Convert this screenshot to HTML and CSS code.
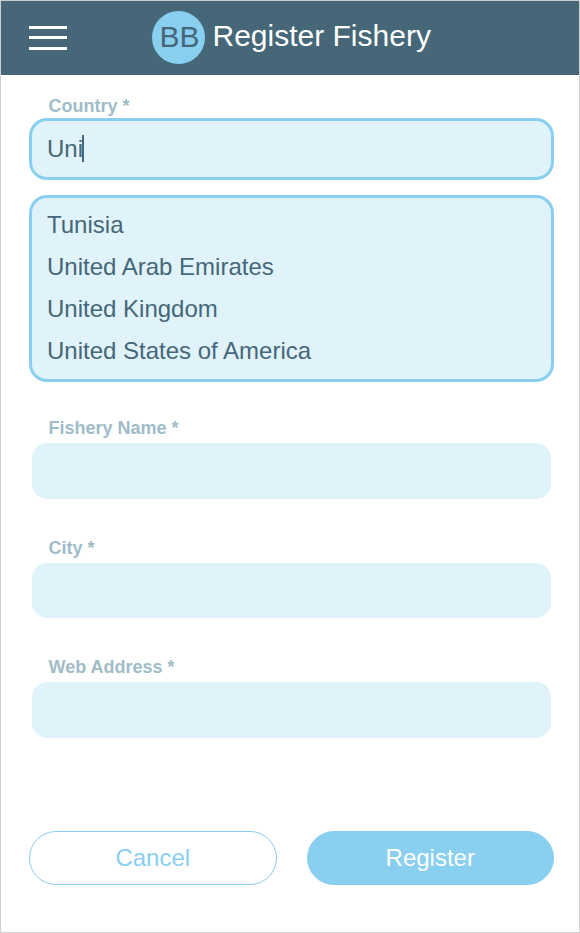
FILE: index.html
```html
<!DOCTYPE html>
<html lang="en">
<head>
<meta charset="utf-8">
<title>Register Fishery</title>
<link rel="stylesheet" href="styles.css">
</head>
<body>
<main class="screen">
  <header class="topbar">
    <div class="menu"><span></span><span></span><span></span></div>
    <div class="logo">BB</div>
    <h1 class="title">Register Fishery</h1>
  </header>
  <form class="form">
    <div class="field country">
      <label class="label">Country *</label>
      <div class="input active"><span>Uni</span><i class="caret"></i></div>
      <ul class="options">
        <li>Tunisia</li>
        <li>United Arab Emirates</li>
        <li>United Kingdom</li>
        <li>United States of America</li>
      </ul>
    </div>
    <div class="field name"><label class="label">Fishery Name *</label><div class="input"></div></div>
    <div class="field city"><label class="label">City *</label><div class="input"></div></div>
    <div class="field web"><label class="label">Web Address *</label><div class="input"></div></div>
    <div class="actions">
      <button type="button" class="btn outline">Cancel</button>
      <button type="button" class="btn solid">Register</button>
    </div>
  </form>
</main>
</body>
</html>
```
FILE: styles.css
```css
* { box-sizing: border-box; }
body { margin: 0; background: #fff; font-family: "Liberation Sans", Arial, sans-serif; color: #456778; }
.screen { height: 933px; border: 1px solid #cfcfcf; overflow: hidden; }
.topbar { height: 74px; background: #456778; display: flex; align-items: flex-start; padding-left: 28px; }
.menu { width: 38px; margin-top: 25px; display: flex; flex-direction: column; gap: 7px; }
.menu span { height: 3px; background: #fff; }
.menu span:last-child { margin-top: 1px; }
.logo { width: 53px; height: 53px; margin: 10px 0 0 85px; padding-left: 2px; border-radius: 50%; background: #89cff0; font-size: 30px; line-height: 51px; text-align: center; }
.title { margin: 17px 0 0 7.5px; color: #fff; font-size: 30px; font-weight: 400; line-height: 36px; white-space: nowrap; }
.form { padding: 0 25px 0 28px; }
.field { display: flex; flex-direction: column; }
.label { padding-left: 19.5px; font-size: 18px; line-height: 20px; font-weight: 700; color: #a0bcc8; }
.country { padding-top: 21px; }
.input { height: 56px; margin: 5px 3px 0; border-radius: 15px; background: #e0f3fb; }
.input.active { height: 62px; margin: 2px 0 0; padding-left: 15px; border: 3px solid #89cff0; border-radius: 18px; display: flex; align-items: center; font-size: 24px; }
.caret { width: 2px; height: 27px; margin: -2px 0 0 -1px; background: #456778; }
.options { list-style: none; height: 187px; margin: 15px 0 0; padding: 6px 15px; border: 3px solid #89cff0; border-radius: 18px; background: #e0f3fb; font-size: 24px; line-height: 42px; }
.name { margin-top: 36px; }
.city { margin-top: 39px; }
.city .input { height: 55px; }
.web { margin-top: 39px; }
.actions { margin-top: 93px; display: flex; gap: 30px; }
.btn { flex: 1; height: 54px; padding: 0; border: 1px solid #89cff0; border-radius: 27px; font: 24px "Liberation Sans", Arial, sans-serif; }
.outline { background: #fff; color: #89cff0; }
.solid { background: #89cff0; color: #fff; }
```
